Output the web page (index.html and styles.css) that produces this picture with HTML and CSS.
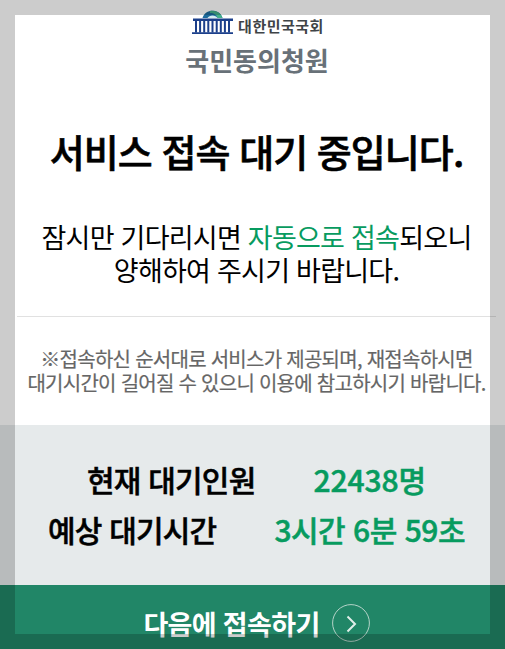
FILE: index.html
```
<!DOCTYPE html>
<html lang="ko">
<head>
    <meta charset="UTF-8">
    <meta name="viewport" content="width=device-width, initial-scale=1.0">
    <title>국민동의청원</title>
    <link rel="stylesheet" href="styles.css">
</head>
<body>
    <div class="wait-page">
        <header class="logo">
            <div class="logo-top">
                <svg class="logo-mark" width="42" height="25" viewBox="0 0 42 25">
                    <path d="M10.5 8 C12 3 16 .8 20.5 .8 C25 .8 29 3 30.5 8 Z" fill="#1d6b9d"/>
                    <path d="M18 1 C24 0 29 3 30.5 8 H25.5 C25 5 22 3 18 3 Z" fill="#43b08b"/>
                    <path d="M15.5 8 C17 4.5 24 4.5 25.5 8 Z" fill="#d5edf2"/>
                    <path d="M1 8.5 H41 V11 H1 Z M0 22.3 H41 V24 H0 Z" fill="#1b3f8b"/>
                    <path d="M4 11 V22.5 M8.1 11 V22.5 M12.2 11 V22.5 M16.3 11 V22.5 M20.5 11 V22.5 M24.7 11 V22.5 M28.8 11 V22.5 M32.9 11 V22.5 M37 11 V22.5" stroke="#1b3f8b" stroke-width="2"/>
                </svg>
                <span class="logo-org">대한민국국회</span>
            </div>
            <div class="logo-name">국민동의청원</div>
        </header>

        <h1>서비스 접속 대기 중입니다.</h1>

        <div class="guide">
            <p>잠시만 기다리시면 <em>자동으로 접속</em>되오니</p>
            <p>양해하여 주시기 바랍니다.</p>
        </div>

        <div class="notice">
            <p>※접속하신 순서대로 서비스가 제공되며, 재접속하시면</p>
            <p>대기시간이 길어질 수 있으니 이용에 참고하시기 바랍니다.</p>
        </div>

        <div class="status">
            <div class="status-row">
                <span>현재 대기인원</span>
                <strong>22438명</strong>
            </div>
            <div class="status-row">
                <span>예상 대기시간</span>
                <strong>3시간 6분 59초</strong>
            </div>
        </div>

        <a class="later" href="#">
            <span>다음에 접속하기</span>
            <svg width="38" height="38" viewBox="0 0 38 38" fill="none">
                <circle cx="19" cy="19" r="18.4" stroke="#b4d3c8" stroke-width="1"/>
                <path d="M15.5 12.5 L23 20 L15.5 27.5" stroke="#e0eee9" stroke-width="2"/>
            </svg>
        </a>
    </div>
    <div class="frame"></div>
</body>
</html>
```
FILE: styles.css
```
* { box-sizing: border-box; }
body { margin: 0; background: #fff; color: #000; font-family: "Noto Sans CJK KR", "Noto Sans", sans-serif; overflow: hidden; }
p { margin: 0; }
.wait-page { display: flex; flex-direction: column; height: 649px; text-align: center; white-space: nowrap; }

.logo { height: 84px; padding: 10px 0 0 9px; }
.logo-top { display: flex; justify-content: center; align-items: flex-start; gap: 4px; height: 32px; padding-left: 2px; }
.logo-mark { flex: none; }
.logo-org { color: #3f4447; font-size: 15px; font-weight: 700; line-height: 31px; letter-spacing: 0.5px; }
.logo-name { color: #687178; font-size: 26px; font-weight: 700; line-height: 35px; }

h1 { height: 116px; margin: 0; padding: 37px 0 0 8px; font-size: 38px; font-weight: 500; line-height: 60px; letter-spacing: -0.95px; -webkit-text-stroke: 0.6px #000; }

.guide { height: 117px; margin: 0 9px 0 17px; padding-top: 20px; border-bottom: 1px solid #e1e1e1; font-size: 27px; line-height: 33px; letter-spacing: -0.75px; }
.guide em { color: #079b5f; font-style: normal; }
.notice { height: 108px; padding: 30px 0 0 8px; color: #666; font-size: 20px; line-height: 24px; letter-spacing: -0.73px; -webkit-text-stroke: 0.2px #666; }

.status { height: 160px; padding: 29px 0 0 8px; background: #e6eaeb; font-size: 30px; font-weight: 500; line-height: 50px; letter-spacing: -0.8px; -webkit-text-stroke: 0.5px; }
.status-row { display: flex; justify-content: center; gap: 58px; }
.status-row strong { color: #079b5f; font-weight: 500; letter-spacing: -0.5px; }
.status-row:first-child strong { letter-spacing: -0.1px; }

.later { display: flex; justify-content: center; align-items: flex-start; gap: 12px; height: 64px; padding: 19px 0 0 8px; background: #218667; color: #fff; font-size: 27px; font-weight: 700; line-height: 40px; letter-spacing: -0.65px; text-decoration: none; }

/* dimmed edge laid over the whole window */
.frame { position: fixed; inset: 0; border: 15px solid rgba(0, 0, 0, 0.2); pointer-events: none; }
```
